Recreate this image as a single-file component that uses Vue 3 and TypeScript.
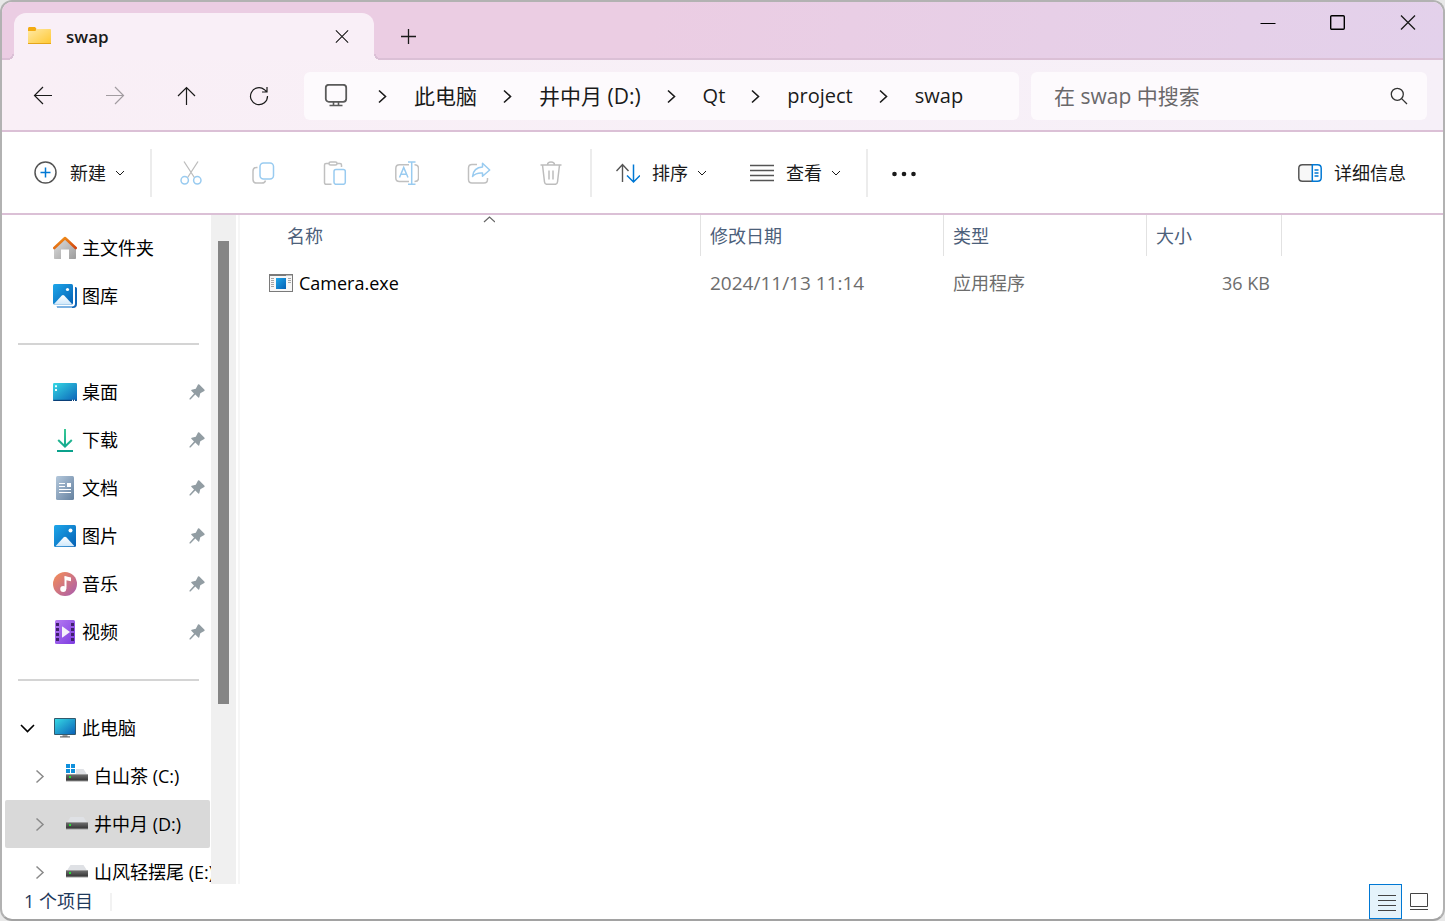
<script setup lang="ts">
import { ref } from 'vue'

interface Place {
  label: string
  icon: string
  pinned?: boolean
}

interface Drive {
  label: string
  icon: string
  selected?: boolean
}

interface FileRow {
  name: string
  modified: string
  kind: string
  size: string
}

interface Crumb {
  label: string
  latin?: boolean
}

const query = ref('')

const crumbs: Crumb[] = [
  { label: '此电脑' },
  { label: '井中月 (D:)' },
  { label: 'Qt', latin: true },
  { label: 'project', latin: true },
  { label: 'swap', latin: true },
]

const home: Place[] = [
  { label: '主文件夹', icon: 'home' },
  { label: '图库', icon: 'gallery' },
]

const pinned: Place[] = [
  { label: '桌面', icon: 'desktop', pinned: true },
  { label: '下载', icon: 'download', pinned: true },
  { label: '文档', icon: 'document', pinned: true },
  { label: '图片', icon: 'picture', pinned: true },
  { label: '音乐', icon: 'music', pinned: true },
  { label: '视频', icon: 'video', pinned: true },
]

const drives: Drive[] = [
  { label: '白山茶 (C:)', icon: 'system-drive' },
  { label: '井中月 (D:)', icon: 'drive', selected: true },
  { label: '山风轻摆尾 (E:)', icon: 'drive' },
]

const actions = [
  { label: '剪切', icon: 'cut' },
  { label: '复制', icon: 'copy' },
  { label: '粘贴', icon: 'paste' },
  { label: '重命名', icon: 'rename' },
  { label: '共享', icon: 'share' },
  { label: '删除', icon: 'trash' },
]

const files: FileRow[] = [
  { name: 'Camera.exe', modified: '2024/11/13 11:14', kind: '应用程序', size: '36 KB' },
]
</script>

<template>
  <div class="window">
    <svg class="sprite" aria-hidden="true">
      <defs>
        <linearGradient id="g-folder" x1="0" y1="0" x2="1" y2="1">
          <stop offset="0" stop-color="#ffe9a6" /><stop offset="1" stop-color="#ffc832" />
        </linearGradient>
        <linearGradient id="g-roof" x1="0" y1="0" x2="1" y2="1">
          <stop offset="0" stop-color="#f59b1c" /><stop offset="1" stop-color="#d2440f" />
        </linearGradient>
        <linearGradient id="g-wall" x1="0" y1="0" x2="1" y2="1">
          <stop offset="0" stop-color="#e0e0e0" /><stop offset="1" stop-color="#9c9c9c" />
        </linearGradient>
        <linearGradient id="g-blue" x1="0" y1="0" x2="1" y2="1">
          <stop offset="0" stop-color="#1ea7ea" /><stop offset="1" stop-color="#0560b4" />
        </linearGradient>
        <linearGradient id="g-hill" x1="0" y1="0" x2="0" y2="1">
          <stop offset="0" stop-color="#ffffff" /><stop offset="1" stop-color="#cfe8fb" />
        </linearGradient>
        <linearGradient id="g-desk" x1="0" y1="0" x2="1" y2="1">
          <stop offset="0" stop-color="#35d8e4" /><stop offset="1" stop-color="#0b62b8" />
        </linearGradient>
        <linearGradient id="g-down" x1="0" y1="0" x2="0" y2="24" gradientUnits="userSpaceOnUse">
          <stop offset="0" stop-color="#3ccb96" /><stop offset="1" stop-color="#08a08c" />
        </linearGradient>
        <linearGradient id="g-doc" x1="0" y1="0" x2="1" y2="1">
          <stop offset="0" stop-color="#b4c8dc" /><stop offset="1" stop-color="#65819f" />
        </linearGradient>
        <linearGradient id="g-music" x1="0" y1="0" x2="1" y2="1">
          <stop offset="0.1" stop-color="#f08a5c" /><stop offset="1" stop-color="#a75bb0" />
        </linearGradient>
        <linearGradient id="g-video" x1="0" y1="0" x2="1" y2="1">
          <stop offset="0" stop-color="#b57bf2" /><stop offset="1" stop-color="#7d3be0" />
        </linearGradient>
        <linearGradient id="g-drive" x1="0" y1="0" x2="0" y2="1">
          <stop offset="0" stop-color="#6a6a6a" /><stop offset="1" stop-color="#343434" />
        </linearGradient>
      </defs>

      <symbol id="folder" viewBox="0 0 24 24">
        <path d="M0 3.500Q0 2 1.200 2h5.500q1 0 1.500 1.500L8.500 6H0z" fill="#f3ab12" />
        <path d="M0 6h7.200l2-2H22.200q0.800 0 0.800 0.800V19H0z" fill="url(#g-folder)" />
        <path d="M0 18h23v0.500q0 0.500-0.600 0.500H0.600Q0 19 0 18.500z" fill="#e5a51a" />
      </symbol>

      <symbol id="home" viewBox="0 0 24 24">
        <path d="M1 11 12 2l11 9v11.200q0 0.800-0.800 0.800H16v-9.500H8V23H1.800Q1 23 1 22.200z" fill="url(#g-wall)" />
        <path d="M1.300 12 12 2l10.700 10" fill="none" stroke="url(#g-roof)" stroke-width="2.600" stroke-linejoin="round" stroke-linecap="round" />
      </symbol>

      <symbol id="gallery" viewBox="0 0 24 24">
        <path d="M22 3h0.500Q24 3 24 4.500V20q0 4-4 4H6q-2 0-2.500-1.500H19q3 0 3-3z" fill="#0f66b8" />
        <path d="M4 23h15" stroke="#7db2e2" stroke-width="2" />
        <rect x="0" y="0" width="20" height="20.500" rx="1.500" fill="url(#g-blue)" />
        <path d="M1 20 8.800 11.600q1.200-1.200 2.400 0L19 20q-1 0.500-2 0.500H3Q2 20.500 1 20z" fill="url(#g-hill)" />
        <circle cx="14.500" cy="5.500" r="1.600" fill="#fff" />
      </symbol>

      <symbol id="desktop" viewBox="0 0 24 24">
        <rect x="0" y="3" width="24" height="18" rx="1.200" fill="url(#g-desk)" />
        <path d="M0.300 20.400h23.400" stroke="#0a3f78" stroke-width="1.200" />
        <path d="M2 5.200h2v2H2zM2 9h2v2H2z" fill="#e8ffff" />
        <path d="M19 20.400h1M21 20.400h1" stroke="#fff" stroke-width="1.200" />
      </symbol>

      <symbol id="download" viewBox="0 0 24 24">
        <g fill="none" stroke="url(#g-down)" stroke-width="2">
          <path d="M12 1v17M5.200 12l6.800 6.500L18.800 12" />
          <path d="M4 23h16" />
        </g>
      </symbol>

      <symbol id="document" viewBox="0 0 24 24">
        <rect x="3" y="0" width="18" height="24" rx="1.500" fill="url(#g-doc)" />
        <path d="M6 7.500h6M6 10.500h6M6 13.500h12M6 16.500h12" stroke="#fff" stroke-width="1.200" />
        <rect x="14" y="7" width="4" height="4" fill="#fff" />
      </symbol>

      <symbol id="picture" viewBox="0 0 24 24">
        <rect x="1" y="1" width="22" height="22" rx="1.500" fill="url(#g-blue)" />
        <path d="M2.500 22.300 10.700 13.300q1.300-1.300 2.600 0L21.500 22.300z" fill="url(#g-hill)" />
        <circle cx="17.500" cy="6.500" r="2" fill="#fff" />
      </symbol>

      <symbol id="music" viewBox="0 0 24 24">
        <circle cx="12" cy="12" r="12" fill="url(#g-music)" />
        <path d="M11.500 4 18 5.500V9.300l-4.700-1V17" fill="#fff" />
        <path d="M12.400 4.500V17" stroke="#fff" stroke-width="1.800" />
        <circle cx="10.200" cy="17" r="3" fill="#fff" />
      </symbol>

      <symbol id="video" viewBox="0 0 24 24">
        <rect x="2" y="0" width="20" height="24" rx="1.500" fill="url(#g-video)" />
        <path d="M3 3h3v3H3zM3 8h3v3H3zM3 13h3v3H3zM3 18h3v3H3zM18 3h3v3h-3zM18 8h3v3h-3zM18 13h3v3h-3zM18 18h3v3h-3z" fill="#40206e" />
        <path d="M9 6.800v10.400q0 0.500 0.500 0.200l7.500-5.400-7.500-5.400Q9 6.300 9 6.800z" fill="#f4f0fa" />
      </symbol>

      <symbol id="computer" viewBox="0 0 24 24">
        <path d="M9.500 18h5v3h-5z" fill="#9b9b9b" />
        <rect x="7" y="20.300" width="10" height="1.200" fill="#666" />
        <rect x="1" y="2" width="22" height="17" rx="1" fill="#31596d" />
        <rect x="2" y="3" width="20" height="15" fill="url(#g-desk)" />
      </symbol>

      <symbol id="drive" viewBox="0 0 24 24">
        <path d="M5.500 5h13L23 12H1z" fill="#dfe1e5" />
        <rect x="1" y="10" width="22" height="7.500" fill="#9b9b9b" />
        <rect x="1" y="11" width="22" height="5.500" fill="url(#g-drive)" />
        <rect x="4" y="12" width="2" height="2" fill="#25e035" />
      </symbol>

      <symbol id="system-drive" viewBox="0 0 24 24">
        <path d="M10 5h8.500L23 12H1z" fill="#dfe1e5" />
        <path d="M0 0h11v10H0z" fill="#fff" />
        <path d="M1 0h4v4H1zM6 0h4v4H6zM1 5h4v4H1zM6 5h4v4H6z" fill="#1090dc" />
        <rect x="1" y="10" width="22" height="7.500" fill="#9b9b9b" />
        <rect x="1" y="11" width="22" height="5.500" fill="url(#g-drive)" />
        <rect x="4" y="12" width="2" height="2" fill="#25e035" />
      </symbol>

      <symbol id="pin" viewBox="0 0 16 16">
        <path d="M9 0.500Q9.700 0 10.300 0.600L15.500 5.800Q16 6.500 15.300 6.900L11.300 9.300 10.300 13.200Q10 14 9.300 13.400L6.300 10.600 1.500 15.500H0.500V14.500L5 9.500 2.300 6.700Q1.800 6 2.700 5.700L6.800 4.700z" fill="#929da3" />
      </symbol>

      <symbol id="cut" viewBox="0 0 24 24">
        <path d="M5 0.500 15.700 17M19 0.500 8.300 17" fill="none" stroke="#bdbdbd" stroke-width="1.300" />
        <g fill="#fff" stroke="#99cbf0" stroke-width="1.500">
          <circle cx="5.700" cy="19.300" r="3.700" /><circle cx="18.300" cy="19.300" r="3.700" />
        </g>
      </symbol>

      <symbol id="copy" viewBox="0 0 24 24">
        <path d="M6.500 6.500H5.500q-3.500 0-3.500 3.500v8.500Q2 22 5.500 22h5.500q3 0 3.500-2.500" fill="none" stroke="#c0c0c0" stroke-width="1.500" />
        <rect x="9" y="2" width="13.500" height="16" rx="3.500" fill="none" stroke="#99cbf0" stroke-width="1.500" />
      </symbol>

      <symbol id="paste" viewBox="0 0 24 24">
        <path d="M8.500 23.300H3q-1.500 0-1.500-1.500V4Q1.500 2.500 3 2.500h3M14 2.500h3q1.500 0 1.500 1.500v2" fill="none" stroke="#c0c0c0" stroke-width="1.500" />
        <rect x="6" y="1" width="8" height="3" rx="1.500" fill="#fff" stroke="#c0c0c0" stroke-width="1.500" />
        <rect x="11" y="8.500" width="11.300" height="14.800" rx="2" fill="#fff" stroke="#99cbf0" stroke-width="1.500" />
      </symbol>

      <symbol id="rename" viewBox="0 0 24 24">
        <path d="M14 20.500H4.500Q0.800 20.500 0.800 17V7.500Q0.800 3.800 4.500 3.800H14M19.500 3.800q4 0 4 3.700V17q0 3.500-4 3.500" fill="none" stroke="#c0c0c0" stroke-width="1.500" />
        <path d="M4.500 16.500 8.700 6.500 13 16.500M6 13.300h5.500M13 1h7.500M13 23.300h7.500M16.700 1v22.300" fill="none" stroke="#99cbf0" stroke-width="1.500" />
      </symbol>

      <symbol id="share" viewBox="0 0 24 24">
        <path d="M10 3.500H5Q1.500 3.500 1.500 7v11.500Q1.500 22 5 22h12q3.500 0 3.500-3.500V17" fill="none" stroke="#c0c0c0" stroke-width="1.500" />
        <path d="M15.500 2.300 22.700 9 15.500 15.300V12Q9 11.500 5.500 15.500 6.500 6.500 15.500 6z" fill="none" stroke="#99cbf0" stroke-width="1.500" stroke-linejoin="round" />
      </symbol>

      <symbol id="trash" viewBox="0 0 24 24">
        <g fill="none" stroke="#bdbdbd" stroke-width="1.500">
          <path d="M1.500 4h21M3.500 4l2 17q0.300 2.300 2.500 2.300h8q2.200 0 2.500-2.300l2-17M8.500 4Q8.500 1 12 1t3.500 3" />
          <path d="M10 9.500v9M14 9.500v9" />
        </g>
      </symbol>

      <symbol id="chevron-right" viewBox="0 0 16 16">
        <path d="M4 2.500 10.500 8.500 4 14.500" fill="none" stroke="currentColor" stroke-width="1.600" />
      </symbol>
      <symbol id="chevron-down" viewBox="0 0 12 12">
        <path d="M2 4l4 4 4-4" fill="none" stroke="currentColor" stroke-width="1" />
      </symbol>
      <symbol id="cross" viewBox="0 0 16 16">
        <path d="M1 0.500l14 14M15 0.500l-14 14" fill="none" stroke="currentColor" stroke-width="1.300" />
      </symbol>
    </svg>

    <header class="titlebar">
      <div class="tab">
        <svg class="i24"><use href="#folder" /></svg>
        <span class="tab-title">swap</span>
        <button class="tab-close" aria-label="关闭标签页"><svg class="i14"><use href="#cross" /></svg></button>
      </div>
      <button class="tab-new" aria-label="新标签页">
        <svg class="i16" viewBox="0 0 16 16"><path d="M8.500 0v15M1 7.500h15" stroke="#1a1a1a" stroke-width="1.300" /></svg>
      </button>
      <div class="controls">
        <button aria-label="最小化"><svg class="i16" viewBox="0 0 16 16"><path d="M0.500 8.500h15" stroke="#000" stroke-width="1" /></svg></button>
        <button aria-label="最大化">
          <svg class="i16" viewBox="0 0 16 16"><rect x="0.700" y="0.700" width="13.600" height="13.600" rx="1" fill="none" stroke="#000" stroke-width="1.400" /></svg>
        </button>
        <button aria-label="关闭"><svg class="i16"><use href="#cross" /></svg></button>
      </div>
    </header>

    <nav class="navbar" aria-label="导航">
      <div class="history">
        <button aria-label="后退">
          <svg class="i20" viewBox="0 0 20 20"><path d="M19 9.500H1.500M10 1 1.500 9.500 10 18" /></svg>
        </button>
        <button aria-label="前进" disabled>
          <svg class="i20" viewBox="0 0 20 20"><path d="M1 9.500h17.500M10 1l8.500 8.500L10 18" /></svg>
        </button>
        <button aria-label="向上">
          <svg class="i20" viewBox="0 0 20 20"><path d="M9.500 19V1.500M1 10l8.500-8.500L18 10" /></svg>
        </button>
        <button aria-label="刷新">
          <svg class="i20" viewBox="0 0 20 20"><path d="M18.500 10A8.500 8.500 0 1 1 15.500 3.700l2 2M18 1v5h-5" /></svg>
        </button>
      </div>
      <div class="address">
        <button class="address-root" aria-label="位置">
          <svg class="i24" viewBox="0 0 24 24">
            <rect x="1.800" y="0.800" width="20.400" height="17" rx="3" fill="none" stroke="#5a5a5a" stroke-width="1.800" />
            <path d="M9.500 18V21.500M14.500 18V21.500M5.500 21.500h13" fill="none" stroke="#5a5a5a" stroke-width="1.600" />
          </svg>
        </button>
        <template v-for="crumb in crumbs" :key="crumb.label">
          <span class="sep"><svg class="i16"><use href="#chevron-right" /></svg></span>
          <a href="#" class="crumb" :class="{ latin: crumb.latin }">{{ crumb.label }}</a>
        </template>
      </div>
      <label class="search">
        <input v-model="query" type="text" placeholder="在 swap 中搜索" aria-label="搜索" />
        <svg class="i18" viewBox="0 0 18 18">
          <circle cx="7.300" cy="7.300" r="6" fill="none" stroke="#333" stroke-width="1.300" />
          <path d="M11.600 11.600 17 17" stroke="#333" stroke-width="1.300" />
        </svg>
      </label>
    </nav>

    <div class="toolbar" role="toolbar">
      <button class="command">
        <svg class="i24" viewBox="0 0 24 24">
          <circle cx="11.500" cy="11.500" r="10.500" fill="none" stroke="#555" stroke-width="1.500" />
          <path d="M11.500 6.500v10M6.500 11.500h10" stroke="#0078d4" stroke-width="1.500" />
        </svg>
        <span>新建</span>
        <svg class="i12"><use href="#chevron-down" /></svg>
      </button>
      <span class="divider"></span>
      <div class="actions">
        <button v-for="action in actions" :key="action.icon" :aria-label="action.label" disabled>
          <svg class="i24"><use :href="'#' + action.icon" /></svg>
        </button>
      </div>
      <span class="divider"></span>
      <div class="views">
        <button class="command">
          <svg class="i24" viewBox="0 0 24 24">
            <path d="M6.500 21V3.500M0.500 10l6-6.500 6 6.500" fill="none" stroke="#555" stroke-width="1.400" />
            <path d="M17.500 3.500V21M11 14.500l6.500 6.500 6.500-6.500" fill="none" stroke="#0078d4" stroke-width="1.500" />
          </svg>
          <span>排序</span>
          <svg class="i12"><use href="#chevron-down" /></svg>
        </button>
        <button class="command">
          <svg class="i24" viewBox="0 0 24 24"><path d="M0 4.500h24M0 9.500h24M0 14.500h24M0 19.500h24" stroke="#555" stroke-width="1.400" /></svg>
          <span>查看</span>
          <svg class="i12"><use href="#chevron-down" /></svg>
        </button>
      </div>
      <span class="divider"></span>
      <button class="more" aria-label="更多">
        <svg class="i24" viewBox="0 0 24 24"><g fill="#1a1a1a"><circle cx="2.500" cy="13" r="2.300" /><circle cx="12" cy="13" r="2.300" /><circle cx="21.500" cy="13" r="2.300" /></g></svg>
      </button>
      <button class="command details">
        <svg class="i24" viewBox="0 0 24 24">
          <path d="M14 3.700H4.500Q0.800 3.700 0.800 7.200v9.600Q0.800 20.300 4.500 20.300H14" fill="#f8f8f8" stroke="#555" stroke-width="1.500" />
          <path d="M14.300 3.700h5.200q3.700 0 3.700 3.500v9.600q0 3.500-3.700 3.500h-5.200zM16.500 9h4M16.500 12h4M16.500 15h4" fill="none" stroke="#0078d4" stroke-width="1.500" />
        </svg>
        <span>详细信息</span>
      </button>
    </div>

    <div class="body">
      <aside class="sidebar">
        <a v-for="place in home" :key="place.label" href="#" class="place">
          <svg class="i24"><use :href="'#' + place.icon" /></svg><span>{{ place.label }}</span>
        </a>
        <hr />
        <a v-for="place in pinned" :key="place.label" href="#" class="place">
          <svg class="i24"><use :href="'#' + place.icon" /></svg><span>{{ place.label }}</span>
          <svg class="i16 pin"><use href="#pin" /></svg>
        </a>
        <hr />
        <a href="#" class="place root">
          <svg class="i16 twist" viewBox="0 0 16 16"><path d="M2 5l6.500 6.500L15 5" fill="none" stroke="currentColor" stroke-width="1.600" /></svg>
          <svg class="i24"><use href="#computer" /></svg><span>此电脑</span>
        </a>
        <a v-for="drive in drives" :key="drive.label" href="#" class="place drive" :class="{ selected: drive.selected }">
          <svg class="i16 twist" viewBox="0 0 16 16"><path d="M5.500 2.500 12 8.500l-6.500 6" fill="none" stroke="currentColor" stroke-width="1.500" /></svg>
          <svg class="i24"><use :href="'#' + drive.icon" /></svg><span>{{ drive.label }}</span>
        </a>
      </aside>
      <div class="scrollbar"><div class="thumb"></div></div>

      <main class="content">
        <table>
          <colgroup>
            <col class="c-name" /><col class="c-date" /><col class="c-kind" /><col class="c-size" />
          </colgroup>
          <thead>
            <tr>
              <th class="sorted">
                名称
                <svg class="i12 caret" viewBox="0 0 12 12"><path d="M1 7l5.500-5L12 7" fill="none" stroke="#666" stroke-width="1.200" /></svg>
              </th>
              <th>修改日期</th>
              <th>类型</th>
              <th>大小</th>
            </tr>
          </thead>
          <tbody>
            <tr v-for="file in files" :key="file.name">
              <td>
                <div class="file">
                  <svg class="i24" viewBox="0 0 24 24">
                    <rect x="0.500" y="3.500" width="23" height="17" fill="#f7f7f7" stroke="#7a7a7a" />
                    <path d="M0 4h24" stroke="#7a7a7a" stroke-width="2" />
                    <path d="M17.500 4.500h1M19.500 4.500h1M21.500 4.500h1" stroke="#fff" />
                    <path d="M2 7.500h3M2 9.500h3M2 11.500h3M2 13.500h3M2 15.500h3M19 7.500h3M19 9.500h3M19 11.500h3" stroke="#a5a5a5" />
                    <rect x="7" y="7" width="10" height="11" fill="url(#g-blue)" />
                  </svg>
                  <span>{{ file.name }}</span>
                </div>
              </td>
              <td class="date">{{ file.modified }}</td>
              <td>{{ file.kind }}</td>
              <td class="size">{{ file.size }}</td>
            </tr>
          </tbody>
        </table>
      </main>
    </div>

    <footer class="status">
      <span class="count">1 个项目</span>
      <div class="modes">
        <button class="mode active" aria-label="详细信息视图">
          <svg class="i20" viewBox="0 0 20 20"><path d="M2 3.500h18M2 8.500h18M2 13.500h18M2 18.500h18" stroke="#444" stroke-width="1" /></svg>
        </button>
        <button class="mode" aria-label="大图标视图">
          <svg class="i20" viewBox="0 0 20 20"><path d="M1.500 1.500h17v13h-17zM1 17.500h18" fill="none" stroke="#444" stroke-width="1" /></svg>
        </button>
      </div>
    </footer>
  </div>
</template>

<style>
body {
  background: #e8e8e8;
}
</style>

<style scoped>
.window {
  --line: #dbc0d6;
  box-sizing: border-box;
  display: flex;
  flex-direction: column;
  height: 100vh;
  border: 2px solid #b2b2b2;
  border-bottom-color: #a2a2a2;
  border-radius: 12px;
  overflow: hidden;
  background: #fff;
  color: #1a1a1a;
  font-family: "Open Sans", "Noto Sans CJK SC", sans-serif;
  font-size: 18px;
  line-height: 24px;
}
.window *,
.window *::before,
.window *::after {
  box-sizing: border-box;
}
button {
  display: flex;
  align-items: center;
  justify-content: center;
  padding: 0;
  border: 0;
  background: none;
  color: inherit;
  font: inherit;
}
a {
  color: inherit;
  text-decoration: none;
}
svg {
  flex: none;
  display: block;
}
.sprite {
  position: absolute;
  width: 0;
  height: 0;
}
.i12 { width: 12px; height: 12px; }
.i14 { width: 14px; height: 14px; }
.i16 { width: 16px; height: 16px; }
.i18 { width: 18px; height: 18px; }
.i20 { width: 20px; height: 20px; }
.i24 { width: 24px; height: 24px; }

.titlebar {
  flex: none;
  display: flex;
  align-items: flex-end;
  height: 58px;
  padding-left: 12px;
  background: linear-gradient(100deg, #ebcde3 0%, #ebcde3 45%, #e3d1eb 100%);
  box-shadow: inset 0 -2px var(--line);
}
.tab {
  position: relative;
  display: flex;
  align-items: center;
  width: 360px;
  height: 47px;
  padding: 0 16px 0 14px;
  border-radius: 12px 12px 0 0;
  background: #f9eff7;
}
.tab::before,
.tab::after {
  content: "";
  position: absolute;
  bottom: 0;
  width: 6px;
  height: 6px;
}
.tab::before {
  right: 100%;
  background: radial-gradient(circle at 0 0, #ebcde3 4px, var(--line) 4px, var(--line) 6px, #f9eff7 6px);
}
.tab::after {
  left: 100%;
  background: radial-gradient(circle at 100% 0, #ebcde3 4px, var(--line) 4px, var(--line) 6px, #f9eff7 6px);
}
.tab-title {
  flex: 1;
  padding-left: 14px;
  font-size: 17px;
  font-weight: 600;
}
.tab-close {
  width: 32px;
  height: 32px;
}
.tab-new {
  width: 48px;
  height: 47px;
  margin-left: 10px;
}
.controls {
  display: flex;
  align-self: flex-start;
  margin-left: auto;
}
.controls button {
  width: 70px;
  height: 42px;
}

.navbar {
  flex: none;
  display: flex;
  align-items: center;
  height: 72px;
  padding: 2px 16px 0 5px;
  border-bottom: 2px solid var(--line);
  background: linear-gradient(90deg, #f9eff6, #f6f0f8);
  font-size: 21px;
}
.history {
  display: flex;
  margin-right: 9px;
}
.history button {
  width: 72px;
  height: 48px;
}
.history path {
  fill: none;
  stroke: #1a1a1a;
  stroke-width: 1.2;
}
.history button:disabled path {
  stroke: #a29ca1;
}
.address {
  flex: 1;
  display: flex;
  align-items: center;
  min-width: 0;
  height: 48px;
  margin-right: 12px;
  padding-left: 16px;
  overflow: hidden;
  border-radius: 6px;
  background: #fdfafd;
  white-space: nowrap;
}
.address-root {
  width: 32px;
  height: 48px;
}
.sep {
  display: flex;
  justify-content: center;
  width: 62px;
}
.latin {
  font-size: 20px;
}
.search {
  display: flex;
  align-items: center;
  width: 396px;
  height: 48px;
  padding: 0 19px 0 23px;
  border-radius: 6px;
  background: #fdfafd;
}
.search input {
  flex: 1;
  min-width: 0;
  padding: 0;
  border: 0;
  outline: 0;
  background: none;
  color: #1a1a1a;
  font: inherit;
}
.search input::placeholder {
  color: #6a686a;
  opacity: 1;
}

.toolbar {
  flex: none;
  display: flex;
  align-items: center;
  height: 83px;
  padding: 1px 37px 0 32px;
  border-bottom: 2px solid var(--line);
}
.command {
  height: 48px;
  white-space: nowrap;
}
.command span {
  margin-left: 12px;
}
.command .i12 {
  margin-left: 8px;
}
.divider {
  width: 2px;
  height: 48px;
  background: #ececec;
}
.command + .divider {
  margin-left: 24px;
}
.actions {
  display: flex;
  margin: 0 3px;
}
.actions button {
  width: 72px;
  height: 48px;
}
.views {
  display: flex;
  gap: 42px;
  margin: 0 24px;
}
.more {
  height: 48px;
  margin-left: 24px;
}
.details {
  margin-left: auto;
}

.body {
  flex: 1;
  display: flex;
  min-height: 0;
}
.sidebar {
  flex: none;
  width: 209px;
  padding-top: 9px;
  overflow: hidden;
  color: #000;
}
.place {
  display: flex;
  align-items: center;
  height: 48px;
  margin: 0 1px 0 3px;
  padding-left: 48px;
  border-radius: 2px;
  white-space: nowrap;
}
.place span {
  margin-left: 5px;
}
.pin {
  margin: 0 5px 0 auto;
}
.sidebar hr {
  height: 2px;
  margin: 23px 12px 23px 16px;
  border: 0;
  background: #d4d4d4;
}
.root {
  padding-left: 14px;
}
.root .twist {
  margin-right: 18px;
}
.drive {
  padding-left: 26px;
}
.drive .twist {
  margin-right: 18px;
  color: #8a8a8a;
}
.selected {
  background: #d9d9d9;
}
.scrollbar {
  flex: none;
  width: 25px;
  padding: 26px 7px 0;
  background: #f0f0f0;
}
.thumb {
  height: 72%;
  background: #858585;
}
.content {
  flex: 1;
  min-width: 0;
  margin-left: 2px;
  border-left: 2px solid #f6f6f6;
  overflow: hidden;
}
table {
  table-layout: fixed;
  width: 1042px;
  border-collapse: separate;
  border-spacing: 0;
}
.c-name { width: 461px; }
.c-date { width: 243px; }
.c-kind { width: 203px; }
.c-size { width: 135px; }
th {
  height: 41px;
  padding: 0 0 0 9px;
  border-right: 1px solid #e2e2e2;
  color: #4c607a;
  font-weight: 400;
  text-align: left;
}
th.sorted {
  position: relative;
  padding-left: 47px;
}
.caret {
  position: absolute;
  top: 0;
  left: 243px;
}
td {
  height: 54px;
  padding: 0 0 0 9px;
  color: #6d6d6d;
}
td:first-child {
  padding-left: 29px;
  color: #000;
}
.file {
  display: flex;
  align-items: center;
  gap: 6px;
}
td.date {
  font-size: 19px;
}
td.size {
  padding: 0 12px 0 0;
  text-align: right;
}

.status {
  flex: none;
  display: flex;
  align-items: center;
  justify-content: space-between;
  height: 35px;
  padding: 0 8px 0 22px;
  color: #1e395b;
}
.count {
  height: 18px;
  padding-right: 17px;
  border-right: 2px solid #f2f2f2;
  line-height: 16px;
}
.modes {
  display: flex;
}
.mode {
  width: 33px;
  height: 35px;
  border: 1px solid transparent;
}
.mode.active {
  border-color: #0078d4;
  background: #e5f3fb;
}
</style>
